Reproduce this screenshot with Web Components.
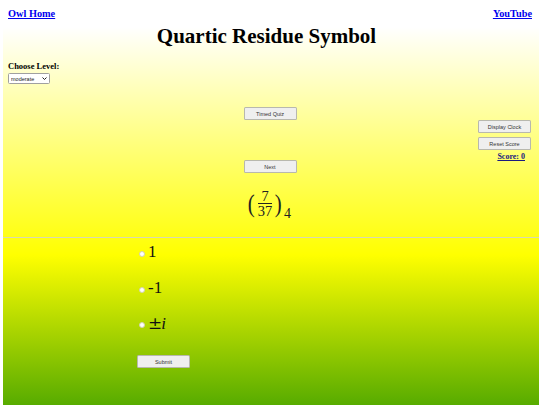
<!DOCTYPE html>
<html><head><meta charset="utf-8"><style>
html,body{margin:0;height:405px;overflow:hidden;background:#fff}
body{font-family:"Liberation Serif",serif;color:#000}
</style></head><body>
<quiz-page></quiz-page>
<script>
/* small grey page button */
class QuizButton extends HTMLElement {
  connectedCallback() {
    this.attachShadow({ mode: "open" }).innerHTML = `
      <style>
        :host { display: block; width: 53px; }
        button {
          display: block; box-sizing: border-box; width: 53px; height: 13px; padding: 0;
          font: 5.5px "Liberation Sans", sans-serif; color: #333;
          background: #efefef; border: 1px solid rgba(130,130,110,.5); border-radius: 1.5px;
        }
      </style>
      <button><slot></slot></button>`;
  }
}
customElements.define("quiz-button", QuizButton);

/* (7/37)_4 */
class ResidueSymbol extends HTMLElement {
  connectedCallback() {
    this.attachShadow({ mode: "open" }).innerHTML = `
      <style>
        :host { display: flex; align-items: center; justify-content: center; height: 34px; padding-right: 2px; font-family: "Liberation Serif", serif; color: #222; }
        .paren { font-size: 26px; line-height: 34px; margin-top: -3px; transform: scaleX(.8); }
        .frac { display: flex; flex-direction: column; align-items: center; font-size: 14.5px; line-height: 11px; margin: -3px 2px 0; }
        .frac span:first-child { border-bottom: 1px solid #222; padding-bottom: 1px; align-self: stretch; text-align: center; }
        .frac span:last-child { padding-top: 2px; }
        sub { font-size: 14px; line-height: 14px; align-self: flex-end; margin: 0 0 1px 1px; }
      </style>
      <span class="paren">(</span>
      <div class="frac"><span>7</span><span>37</span></div>
      <span class="paren">)</span>
      <sub>4</sub>`;
  }
}
customElements.define("residue-symbol", ResidueSymbol);

/* one radio answer */
class AnswerOption extends HTMLElement {
  connectedCallback() {
    this.attachShadow({ mode: "open" }).innerHTML = `
      <style>
        :host { display: flex; align-items: center; height: 18px; font-size: 17px; line-height: 18px; font-family: "Liberation Serif", serif; color: #111; }
        i { width: 4px; height: 4px; border: 1px solid #d2d2b0; border-radius: 50%; background: #fff; margin: 0 3px 0 2px; flex: none; }
        span { margin-top: -4px; }
      </style>
      <i></i><span><slot></slot></span>`;
  }
}
customElements.define("answer-option", AnswerOption);

class QuizPage extends HTMLElement {
  connectedCallback() {
    this.attachShadow({ mode: "open" }).innerHTML = `
      <style>
        :host { display: block; height: 405px; }
        a { color: #00e; font-weight: 700; font-size: 10.3px; text-decoration: underline; }
        .links { display: flex; justify-content: space-between; height: 15px; padding: 7px 8px 0; line-height: 13px; }
        .grad { height: 383px; margin: 0 1px 0 3px; background: linear-gradient(#fff 5px, #ff0 233px, #008000 461px) no-repeat; background-size: 100% 461px; }
        h1 { margin: 0; padding-right: 9px; font-size: 21px; line-height: 28px; text-align: center; }
        .level { padding: 11px 5px 0; height: 23px; }
        .level b { display: block; font-size: 8.5px; line-height: 11px; }
        .pick { position: relative; width: 42px; height: 11px; margin-top: 1px; }
        select { display: block; appearance: none; box-sizing: border-box; width: 100%; height: 100%; padding: 0 0 0 2px; font: 5.5px "Liberation Sans", sans-serif; color: #222; background: #fff; border: 1px solid #a0a0a0; border-radius: 1.5px; }
        .pick svg { position: absolute; right: 3px; top: 4px; width: 5px; height: 3px; pointer-events: none; }
        .mid { position: relative; height: 130px; padding: 23px 2px 0 0; }
        .mid > quiz-button, .next quiz-button { margin: 0 auto; }
        .next { padding-top: 40px; }
        residue-symbol { margin-top: 15px; }
        .side { position: absolute; right: 8px; top: 36px; display: flex; flex-direction: column; gap: 4px; }
        .side u { align-self: flex-end; margin: -2px 6px 0 0; font-size: 8px; font-weight: 700; line-height: 10px; color: #1a1a80; }
        hr { margin: 0; border: 0; height: 1px; background: #d9d9b0; }
        .answers { padding: 7px 0 0 134px; display: flex; flex-direction: column; gap: 17.5px; }
        .submit { margin-top: 3.5px; }
        .pm { font-family: "DejaVu Serif", serif; margin-right: -1px; }
      </style>
      <div class="links"><a href="#">Owl Home</a><a href="#">YouTube</a></div>
      <div class="grad">
        <h1>Quartic Residue Symbol</h1>
        <div class="level">
          <b>Choose Level:</b>
          <div class="pick">
            <select><option>moderate</option></select>
            <svg viewBox="0 0 5 3"><path d="M.5.5 2.5 2.5 4.5.5" fill="none" stroke="#222" stroke-width="1"/></svg>
          </div>
        </div>
        <div class="mid">
          <quiz-button>Timed Quiz</quiz-button>
          <div class="next"><quiz-button>Next</quiz-button></div>
          <residue-symbol></residue-symbol>
          <div class="side">
            <quiz-button>Display Clock</quiz-button>
            <quiz-button>Reset Score</quiz-button>
            <u>Score: 0</u>
          </div>
        </div>
        <hr>
        <div class="answers">
          <answer-option>1</answer-option>
          <answer-option>-1</answer-option>
          <answer-option><span class="pm">±</span><em>i</em></answer-option>
          <div class="submit"><quiz-button>Submit</quiz-button></div>
        </div>
      </div>`;
  }
}
customElements.define("quiz-page", QuizPage);
</script>
</body></html>
